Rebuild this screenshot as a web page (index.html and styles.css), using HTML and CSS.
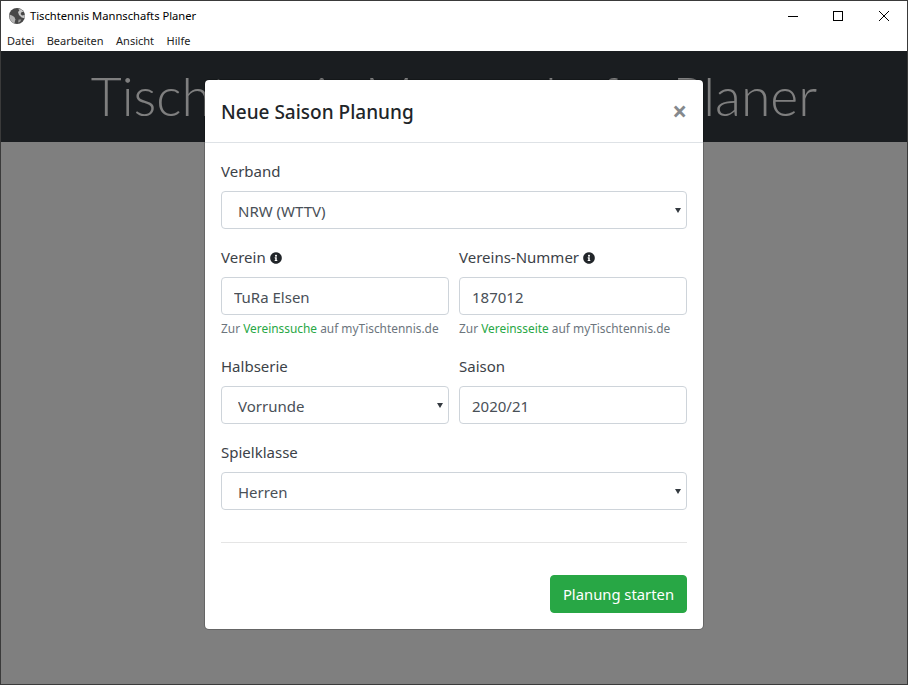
FILE: index.html
```html
<!DOCTYPE html>
<html lang="de">
<head>
    <meta charset="UTF-8">
    <title>Tischtennis Mannschafts Planer</title>
    <link rel="stylesheet" href="styles.css">
</head>
<body>
    <div class="window">
        <div class="titlebar">
            <svg class="app-icon" viewBox="0 0 16 16">
                <circle cx="8" cy="8" r="8" fill="#474747"/>
                <path d="M.4 6.600 3 7.400 5.400 9 6.400 11.600 5.400 15.400 2.400 13.600.6 10.400Z" fill="#b4b4b4"/>
                <path d="M9.400 1 12.400 1.600 14.400 3.800 12.400 4.200 11.600 6 13 7.600 15.800 7 15.600 10.200 12.600 9.600 10 7 9 4 10.400 2.600Z" fill="#c6c6c6"/>
                <path d="M9.600 11.600 12.400 11.400 11 14 9 14.600Z" fill="#9a9a9a"/>
            </svg>
            <span class="app-title">Tischtennis Mannschafts Planer</span>
            <div class="win-buttons">
                <span class="win-btn"><svg viewBox="0 0 10 10" width="10" height="10"><path d="M0 5.500H10" stroke="#000"/></svg></span>
                <span class="win-btn maximize"><svg viewBox="0 0 10 10" width="10" height="10"><rect x=".5" y=".5" width="9" height="9" fill="none" stroke="#000"/></svg></span>
                <span class="win-btn"><svg viewBox="0 0 10 10" width="10" height="10"><path d="M0 0 10 10M10 0 0 10" stroke="#000" stroke-width="1"/></svg></span>
            </div>
        </div>
        <div class="menubar">
            <span>Datei</span>
            <span>Bearbeiten</span>
            <span>Ansicht</span>
            <span>Hilfe</span>
        </div>

        <div class="content">
            <header class="jumbo">
                <h1>Tischtennis Mannschafts Planer</h1>
            </header>

            <div class="backdrop"></div>

            <div class="modal">
                <div class="modal-header">
                    <h5>Neue Saison Planung</h5>
                    <span class="close">&times;</span>
                </div>
                <form class="modal-body" action="#">
                    <div class="form-group">
                        <label>Verband</label>
                        <div class="select-box"><select><option>NRW (WTTV)</option></select></div>
                    </div>
                    <div class="form-row">
                        <div class="form-group">
                            <label>Verein
                                <svg class="info" viewBox="0 0 512 512"><path d="M256 8C119 8 8 119 8 256s111 248 248 248 248-111 248-248S393 8 256 8zm0 110c23.200 0 42 18.800 42 42s-18.800 42-42 42-42-18.800-42-42 18.800-42 42-42zm56 254c0 6.600-5.400 12-12 12h-88c-6.600 0-12-5.400-12-12v-24c0-6.600 5.400-12 12-12h12v-64h-12c-6.600 0-12-5.400-12-12v-24c0-6.600 5.400-12 12-12h64c6.600 0 12 5.400 12 12v100h12c6.600 0 12 5.400 12 12v24z"/></svg>
                            </label>
                            <input class="form-control" type="text" value="TuRa Elsen">
                            <small>Zur <a href="#">Vereinssuche</a> auf myTischtennis.de</small>
                        </div>
                        <div class="form-group">
                            <label>Vereins-Nummer
                                <svg class="info" viewBox="0 0 512 512"><path d="M256 8C119 8 8 119 8 256s111 248 248 248 248-111 248-248S393 8 256 8zm0 110c23.200 0 42 18.800 42 42s-18.800 42-42 42-42-18.800-42-42 18.800-42 42-42zm56 254c0 6.600-5.400 12-12 12h-88c-6.600 0-12-5.400-12-12v-24c0-6.600 5.400-12 12-12h12v-64h-12c-6.600 0-12-5.400-12-12v-24c0-6.600 5.400-12 12-12h64c6.600 0 12 5.400 12 12v100h12c6.600 0 12 5.400 12 12v24z"/></svg>
                            </label>
                            <input class="form-control" type="text" value="187012">
                            <small>Zur <a href="#">Vereinsseite</a> auf myTischtennis.de</small>
                        </div>
                    </div>
                    <div class="form-row">
                        <div class="form-group">
                            <label>Halbserie</label>
                            <div class="select-box"><select><option>Vorrunde</option></select></div>
                        </div>
                        <div class="form-group">
                            <label>Saison</label>
                            <input class="form-control" type="text" value="2020/21">
                        </div>
                    </div>
                    <div class="form-group">
                        <label>Spielklasse</label>
                        <div class="select-box"><select><option>Herren</option></select></div>
                    </div>
                    <hr>
                    <div class="actions">
                        <button type="submit">Planung starten</button>
                    </div>
                </form>
            </div>
        </div>
    </div>
</body>
</html>
```

FILE: styles.css
```css
* {
    box-sizing: border-box;
}
html, body {
    height: 100%;
}
body {
    margin: 0;
    font-family: "Noto Sans", "Open Sans", sans-serif;
    font-size: 15px;
    line-height: 24px;
    color: #212529;
    overflow: hidden;
}
.window {
    height: 685px;
    display: flex;
    flex-direction: column;
    background: #fff;
    border: 1px solid #3a3a3a;
}
.titlebar {
    height: 29px;
    display: flex;
    align-items: center;
    padding-left: 8px;
    font-size: 11.200px;
    color: #000;
}
.app-icon {
    width: 16px;
    height: 16px;
    margin-right: 5px;
}
.win-buttons {
    margin-left: auto;
    display: flex;
}
.win-btn {
    width: 45.500px;
    height: 29px;
    display: flex;
    align-items: center;
    justify-content: center;
}
.win-btn.maximize {
    padding-right: 2px;
}
.menubar {
    height: 21px;
    display: flex;
    align-items: center;
    gap: 12.500px;
    padding-left: 6px;
    font-size: 11px;
    color: #222;
}
.content {
    position: relative;
    flex: 1;
    background: #fff;
}
.jumbo {
    height: 91px;
    background: #343a40;
    color: #fff;
    text-align: center;
}
.jumbo h1 {
    margin: 0;
    font-family: "Lato", sans-serif;
    font-weight: 300;
    font-size: 53.500px;
    line-height: 89px;
    white-space: nowrap;
}
.backdrop {
    position: absolute;
    inset: 0;
    background: rgba(0, 0, 0, .5);
}
.modal {
    position: absolute;
    top: 28px;
    left: 203px;
    width: 500px;
    background: #fff;
    border: 1px solid rgba(0, 0, 0, .2);
    background-clip: padding-box;
    border-radius: 5px;
}
.modal-header {
    display: flex;
    align-items: flex-start;
    justify-content: space-between;
    height: 63px;
    padding: 16px;
    border-bottom: 1px solid #dee2e6;
}
.modal-header h5 {
    margin: 0;
    font-size: 19px;
    font-weight: 500;
    line-height: 30px;
    padding-top: 1px;
}
.close {
    font-size: 26px;
    font-weight: 700;
    line-height: 30px;
    color: #85898d;
}
.modal-body {
    padding: 16px;
}
.form-group {
    margin-bottom: 16px;
    min-width: 0;
}
.form-row {
    display: grid;
    grid-template-columns: 1fr 1fr;
    column-gap: 10px;
}
label {
    display: block;
    margin-bottom: 8px;
    color: #3c4248;
}
.info {
    width: 12px;
    height: 12px;
    vertical-align: -1px;
    fill: #212529;
}
.form-control, select {
    display: block;
    width: 100%;
    height: 38px;
    padding: 7px 12px 5px;
    font: inherit;
    color: #495057;
    background: #fff;
    border: 1px solid #ced4da;
    border-radius: 4px;
}
select {
    appearance: none;
    padding-left: 16px;
}
.select-box {
    position: relative;
}
.select-box::after {
    content: "";
    position: absolute;
    top: 17px;
    right: 6px;
    border-left: 3px solid transparent;
    border-right: 3px solid transparent;
    border-top: 5px solid #343a40;
}
small {
    display: block;
    margin-top: 4px;
    font-size: 11.900px;
    line-height: 19.200px;
    color: #6c757d;
    white-space: nowrap;
}
small a {
    color: #28a745;
    text-decoration: none;
}
hr {
    margin: 32px 0 16px;
    border: 0;
    border-top: 1px solid rgba(0, 0, 0, .1);
}
.actions {
    display: flex;
    justify-content: flex-end;
    padding-top: 16px;
}
button {
    height: 38px;
    width: 137px;
    padding: 0;
    font: inherit;
    font-size: 14.800px;
    color: #fff;
    background: #28a745;
    border: 1px solid #28a745;
    border-radius: 4px;
}
```
